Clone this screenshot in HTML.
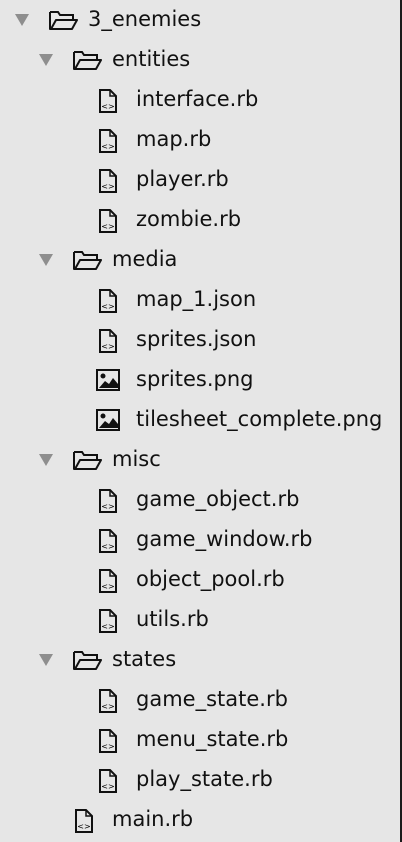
<!DOCTYPE html>
<html><head><style>
body{margin:0;width:402px;height:842px;background:#e6e6e6;position:relative;overflow:hidden;font-family:"DejaVu Sans","Liberation Sans",sans-serif;font-size:21px;color:#111}
.border{position:absolute;right:0;top:0;width:2px;height:842px;background:#1a1a1a}
.r{position:absolute;height:40px;line-height:38px;white-space:nowrap}
.r svg{position:absolute;top:9px}
.tri{position:absolute;width:0;height:0;border-left:7px solid transparent;border-right:7px solid transparent;border-top:12px solid #8e8e8e}
</style></head><body>
<div class="border"></div>
<div id="c"></div>
<script>
const items=[[0,'d','3_enemies'],[1,'d','entities'],[2,'f','interface.rb'],[2,'f','map.rb'],[2,'f','player.rb'],[2,'f','zombie.rb'],[1,'d','media'],[2,'f','map_1.json'],[2,'f','sprites.json'],[2,'i','sprites.png'],[2,'i','tilesheet_complete.png'],[1,'d','misc'],[2,'f','game_object.rb'],[2,'f','game_window.rb'],[2,'f','object_pool.rb'],[2,'f','utils.rb'],[1,'d','states'],[2,'f','game_state.rb'],[2,'f','menu_state.rb'],[2,'f','play_state.rb'],[1,'f','main.rb']];
const folder='<svg style="left:0" width="30" height="22" viewBox="0 0 30 22"><path d="M2 3h8l2 3h13v5" fill="none" stroke="#111" stroke-width="2"/><path d="M2 3v17h22l5-9H8L3 20" fill="none" stroke="#111" stroke-width="2" stroke-linejoin="round"/></svg>';
const file='<svg style="left:0" width="20" height="24" viewBox="0 0 20 24"><path d="M2 1h10l6 6v16H2z" fill="none" stroke="#111" stroke-width="2"/><path d="M12 1v6h6" fill="none" stroke="#111" stroke-width="1.5"/><text x="10" y="20" font-size="8" text-anchor="middle" font-family="DejaVu Sans">&lt;&gt;</text></svg>';
const img='<svg style="left:0" width="24" height="22" viewBox="0 0 24 22"><rect x="1" y="1" width="22" height="20" fill="none" stroke="#111" stroke-width="2"/><circle cx="7" cy="7" r="2.5" fill="#111"/><path d="M3 19l6-7 4 3 4-6 5 6v4z" fill="#111"/></svg>';
let h='';
items.forEach((it,i)=>{const [l,t,n]=it;const y=i*40;const b=l*24;
let ix,ic;
if(t=='d'){h+=`<div class="tri" style="left:${15+b}px;top:${y+14}px"></div>`;ix=48+b;ic=folder;}
else{ic=t=='f'?file:img;ix=t=='f'?50+b:48+b;}
h+=`<div class="r" style="top:${y}px;left:${ix}px">${ic}<span style="position:absolute;left:${88+b-ix}px">${n}</span></div>`;
});
document.getElementById('c').innerHTML=h;
</script>
</body></html>
